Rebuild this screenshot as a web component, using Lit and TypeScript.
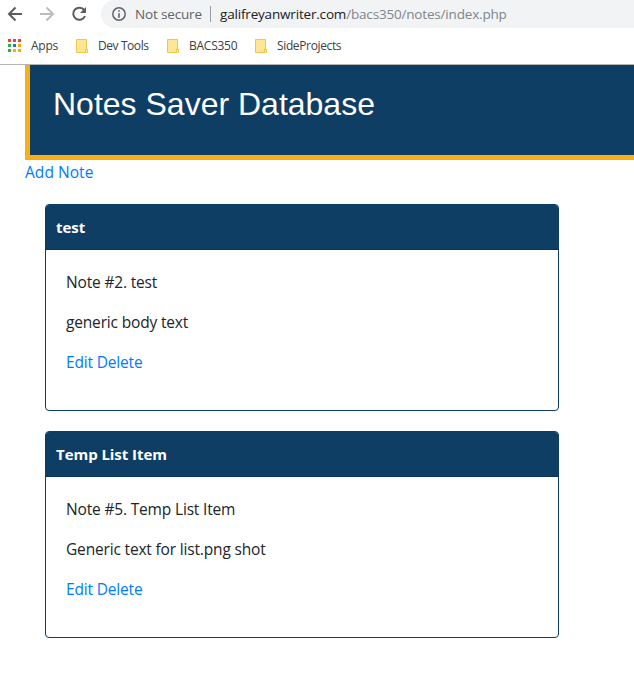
import { LitElement, html, css, svg } from "lit";
import { customElement, property } from "lit/decorators.js";

const sans = css`"Open Sans", "Noto Sans", sans-serif`;

@customElement("browser-bar")
class BrowserBar extends LitElement {
  static styles = css`
    :host { display: block; height: 65px; box-sizing: border-box; border-bottom: 1px solid #b4b4b4; background: #fff; font-family: ${sans}; white-space: nowrap; overflow: hidden; }
    .tools { display: flex; height: 28px; }
    .nav { flex: none; width: 101px; height: 28px; }
    .address { flex: 1; display: flex; align-items: center; background: #f1f3f4; border-radius: 14px 0 0 14px; font-size: 13.5px; line-height: 28px; color: #5f6368; }
    .info { flex: none; width: 34px; height: 28px; }
    .secure { flex: none; width: 75px; letter-spacing: -0.16px; }
    .rule { flex: none; width: 1px; height: 16px; background: #9a9da1; margin-right: 9px; }
    .url { letter-spacing: -0.18px; color: #80868b; }
    .domain { color: #202124; }
    .marks { display: flex; height: 36px; font-size: 12px; line-height: 36px; color: #3c4043; }
    .mark { display: flex; }
    .mark svg { flex: none; height: 36px; }
    .apps { width: 76px; letter-spacing: -0.25px; }
    .one { width: 91px; letter-spacing: -0.42px; }
    .two { width: 88px; letter-spacing: -0.25px; }
    .three { letter-spacing: -0.36px; }
  `;
  folder() {
    return html`<svg width="22" height="36" viewBox="0 0 22 36">
      <path d="M.5 11.500h10v9.500l1 .5v3H.5z" fill="#ffe694" stroke="#ebc84e" />
      <path d="M9.500 24.500v-3.500h2v3.500" fill="#ffe694" stroke="#ebc84e" />
    </svg>`;
  }
  render() {
    const colors = ["#ea4335", "#ea4335", "#ea4335", "#34a853", "#1a73e8", "#fbab05", "#34a853", "#fbab05", "#fbab05"];
    return html`
      <div class="tools">
        <svg class="nav" viewBox="0 0 101 28" fill="none" stroke-width="2">
          <path d="M22 14H9.5M15.5 7.5L9 14l6.500 6.500" stroke="#5a5d61" />
          <path d="M40 14h12.500M46.500 7.500L53 14l-6.500 6.500" stroke="#babcbe" />
          <path d="M84.300 10.200A6.100 6.100 0 1 0 85 16" stroke="#5a5d61" />
          <path d="M86 7v6h-6z" fill="#5a5d61" />
        </svg>
        <div class="address">
          <svg class="info" viewBox="0 0 34 28">
            <circle cx="18" cy="14" r="6.200" fill="none" stroke="#5f6368" stroke-width="1.500" />
            <path d="M17.200 10.200h1.600v1.600h-1.600zM17.200 13.200h1.600v4.600h-1.600z" fill="#5f6368" />
          </svg>
          <span class="secure">Not secure</span>
          <span class="rule"></span>
          <span class="url"><span class="domain">galifreyanwriter.com</span>/bacs350/notes/index.php</span>
        </div>
      </div>
      <div class="marks">
        <div class="mark apps"><svg width="31" height="36" viewBox="0 0 31 36">
          ${colors.map((c, i) => svg`<rect x=${8 + (i % 3) * 5} y=${11 + Math.floor(i / 3) * 5} width="3" height="3" fill=${c} />`)}
        </svg><span>Apps</span></div>
        <div class="mark one">${this.folder()}<span>Dev Tools</span></div>
        <div class="mark two">${this.folder()}<span>BACS350</span></div>
        <div class="mark three">${this.folder()}<span>SideProjects</span></div>
      </div>`;
  }
}

@customElement("note-card")
class NoteCard extends LitElement {
  @property() heading = "";
  @property() number = "";
  @property() body = "";
  static styles = css`
    :host { display: block; box-sizing: border-box; width: 514px; height: 207px; border: 1px solid #0e3d64; border-radius: 4px; overflow: hidden; background: #fff; }
    .head { box-sizing: border-box; height: 45px; padding: 0 10px; background: #0f3e65; border-bottom: 1px solid #0b3357; color: #fff; font-weight: 700; font-size: 15px; line-height: 45px; letter-spacing: -0.05px; }
    .content { padding: 20px; line-height: 24px; }
    p { margin: 0 0 16px; }
    a { color: #007bff; }
  `;
  render() {
    return html`<div class="head">${this.heading}</div>
      <div class="content">
        <p>Note #${this.number}. ${this.heading}</p>
        <p>${this.body}</p>
        <p><a>Edit</a> <a>Delete</a></p>
      </div>`;
  }
}

@customElement("app-root")
class AppRoot extends LitElement {
  static styles = css`
    :host { display: block; height: 686px; overflow: hidden; background: #fff; color: #212529; font: 15.5px/24px ${sans}; letter-spacing: -0.17px; }
    main { padding-left: 25px; }
    h1 { box-sizing: border-box; height: 95px; margin: 0; padding: 19px 23px; border-left: 5px solid #f6af17; border-bottom: 5px solid #f6af17; background: #0f3e65; color: #fff; font: 400 32px/40px "Liberation Sans", Arial, sans-serif; letter-spacing: 0; white-space: nowrap; }
    .add { display: block; color: #007bff; line-height: 24px; letter-spacing: 0.05px; }
    .list { display: flex; flex-direction: column; gap: 20px; padding: 20px; }
  `;
  render() {
    return html`<browser-bar></browser-bar>
      <main>
        <h1>Notes Saver Database</h1>
        <a class="add">Add Note</a>
        <div class="list">
          <note-card heading="test" number="2" body="generic body text"></note-card>
          <note-card heading="Temp List Item" number="5" body="Generic text for list.png shot"></note-card>
        </div>
      </main>`;
  }
}
